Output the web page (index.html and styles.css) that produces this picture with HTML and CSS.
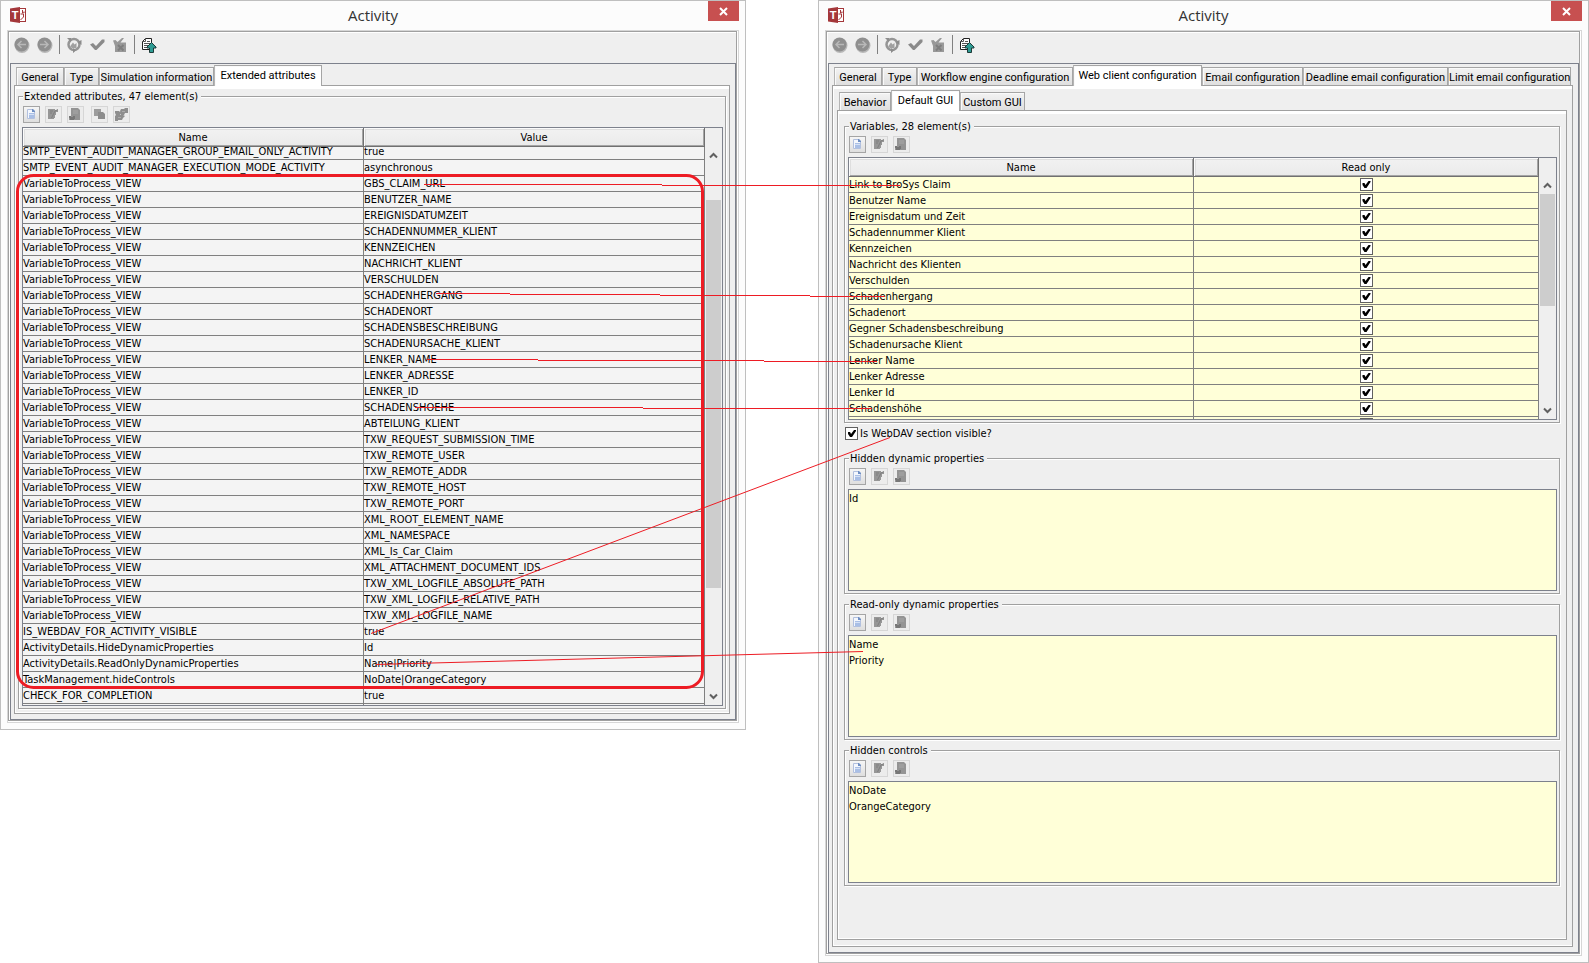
FILE: index.html
```html
<!DOCTYPE html>
<html lang="en">
<head>
<meta charset="utf-8">
<title>Activity</title>
<link rel="stylesheet" href="styles.css">
</head>
<body>
<svg class="defs" aria-hidden="true">
  <symbol id="logo" viewBox="0 0 16 16">
    <rect x="9.500" y="1.500" width="6" height="13" fill="#fff" stroke="#a4373a"/>
    <path d="M0 1.500 10 0v16L0 14.500z" fill="#a4373a"/>
    <path d="M12.500 3v3l1.500-1.500M10.500 7h3v3l-3 3M13 6.500 14.500 5" fill="none" stroke="#a4373a"/>
  </symbol>
  <symbol id="back" viewBox="0 0 16 16">
    <circle cx="8" cy="8.500" r="7.500" fill="#b9b9b9"/><circle cx="7.500" cy="7.500" r="7" fill="#8f8f8f"/>
    <path d="M12 7.500H4M7.500 4 4 7.500 7.500 11" fill="none" stroke="#b8b8b8" stroke-width="1.500"/>
  </symbol>
  <symbol id="forward" viewBox="0 0 16 16">
    <circle cx="8" cy="8.500" r="7.500" fill="#b9b9b9"/><circle cx="7.500" cy="7.500" r="7" fill="#8f8f8f"/>
    <path d="M3 7.500h8M7.500 4 11 7.500 7.500 11" fill="none" stroke="#b8b8b8" stroke-width="1.500"/>
  </symbol>
  <symbol id="refresh" viewBox="0 0 16 16">
    <circle cx="8" cy="7.500" r="5.500" fill="none" stroke="#959595" stroke-width="2.500"/>
    <path d="M4 9.500 7 5.500l1.500 2 2-1.500v5H6z" fill="#a0a0a0"/><path d="M7 16v-5l3 2.500zM1 1h4v4zM15.500 3v5l-4-3z" fill="#8c8c8c"/>
  </symbol>
  <symbol id="check" viewBox="0 0 16 16">
    <path d="M1 7.500 4 6l3 3 6-6.500h2.500V5L7.500 13H6z" fill="#8a8a8a"/>
  </symbol>
  <symbol id="check-page" viewBox="0 0 16 16">
    <path d="M1 3.500 3.500 3 5.500 5 10 1h2L8.500 5.500H14V15H3V9z" fill="#989898"/>
    <path d="M6 8l5.500 5.500M11.500 8 6 13.500" stroke="#7e7e7e" stroke-width="2"/>
  </symbol>
  <symbol id="export" viewBox="0 0 16 16">
    <path d="M4.500 1.500h6v11h-9v-8z" fill="#fff" stroke="#222"/><path d="M4.500 1.500v3h-3M6 4.500h3M3 6.500h6M3 8.500h5M3 10.500h4" fill="none" stroke="#555"/>
    <path d="M10.500 5.500 15 10v1h-2.500v4.500H8.500V11H6v-1z" fill="#2f9c94" stroke="#1d3a38"/>
  </symbol>
  <symbol id="new" viewBox="0 0 15 15">
    <path d="M3.500 2.500h5l2 2v7h-7z" fill="#f4f7fd" stroke="#b2c0de"/><path d="M8 2h1l2 2v1H8z" fill="#6f8fc4"/>
    <path d="M5 6h5v5H5z" fill="#a9bfe6"/><path d="M5 7.500h5" stroke="#d6e1f5"/>
  </symbol>
  <symbol id="edit" viewBox="0 0 15 15">
    <path d="M2 2h7v1h3v2h-2v3H9v3H8v1H2z" fill="#969696"/><path d="M4 4h3M4 6h2M12 2.500 9 4 5.500 11" fill="none" stroke="#7f7f7f"/>
  </symbol>
  <symbol id="delete" viewBox="0 0 15 15">
    <path d="M3 1h7l2 2v10H1v-3l2-1z" fill="#949494"/><path d="M5 4h5M5 6h5" stroke="#a8a8a8"/><path d="M1 9h2v1h2V9h2v3H6v1H2v-2H1z" fill="#777"/>
  </symbol>
  <symbol id="copy" viewBox="0 0 15 15">
    <path d="M2 2h7v7H2z" fill="#9c9c9c"/><path d="M6 5h5l2 2v5H6z" fill="#8c8c8c"/>
  </symbol>
  <symbol id="swap" viewBox="0 0 15 15">
    <path d="M7 2h3l1-1h3v5h-3l-1 2H7L6 4zM1 4h4l2 2-1 2H2L1 6zM2 8h7l2 1-2 2-1 2H4v1H1V9z" fill="#8e8e8e"/><path d="M8 4.500h3M4 10.500h3" stroke="#ababab"/>
  </symbol>
  <symbol id="up" viewBox="0 0 9 7"><path d="M1 5.500 4.500 2 8 5.500" fill="none" stroke="#606060" stroke-width="2"/></symbol>
  <symbol id="down" viewBox="0 0 9 7"><path d="M1 1.500 4.500 5 8 1.500" fill="none" stroke="#606060" stroke-width="2"/></symbol>
</svg>

<main class="stage">
  <section class="window window-a" aria-label="Activity, extended attributes">
    <header class="titlebar">
      <svg class="logo" viewBox="0 0 16 16"><use href="#logo"/><text x="5" y="12" text-anchor="middle" class="logo-letter">T</text></svg>
      <h1>Activity</h1>
      <button class="close" aria-label="Close"><svg viewBox="0 0 9 9"><path d="M1 1l7 7M8 1 1 8" stroke="#fff" stroke-width="2"/></svg></button>
    </header>
    <div class="frame"><div class="frame-inner">
      <div class="toolbar">
        <button aria-label="Back"><svg><use href="#back"/></svg></button>
        <button aria-label="Forward"><svg><use href="#forward"/></svg></button>
        <i class="sep"></i>
        <button aria-label="Refresh"><svg><use href="#refresh"/></svg></button>
        <button aria-label="Apply"><svg><use href="#check"/></svg></button>
        <button aria-label="Apply and close"><svg><use href="#check-page"/></svg></button>
        <i class="sep"></i>
        <button aria-label="Export"><svg><use href="#export"/></svg></button>
      </div>
      <div class="content">
        <nav class="tabs">
          <button class="tab w48">General</button><button class="tab w35">Type</button><button class="tab w115">Simulation information</button><button class="tab w108 selected">Extended attributes</button>
        </nav>
        <div class="pane">
          <fieldset>
            <legend>Extended attributes, 47 element(s)</legend>
            <div class="tools">
              <button aria-label="New"><svg><use href="#new"/></svg></button>
              <button class="off" aria-label="Edit"><svg><use href="#edit"/></svg></button>
              <button class="off" aria-label="Delete"><svg><use href="#delete"/></svg></button>
              <button class="off second" aria-label="Duplicate"><svg><use href="#copy"/></svg></button>
              <button class="off" aria-label="References"><svg><use href="#swap"/></svg></button>
            </div>
            <div class="grid">
              <table>
                <thead><tr><th>Name</th><th>Value</th></tr></thead>
                <tbody>
                <tr class="first"><td>SMTP_EVENT_AUDIT_MANAGER_GROUP_EMAIL_ONLY_ACTIVITY</td><td>true</td></tr>
                <tr><td>SMTP_EVENT_AUDIT_MANAGER_EXECUTION_MODE_ACTIVITY</td><td>asynchronous</td></tr>
                <tr><td>VariableToProcess_VIEW</td><td>GBS_CLAIM_URL</td></tr>
                <tr><td>VariableToProcess_VIEW</td><td>BENUTZER_NAME</td></tr>
                <tr><td>VariableToProcess_VIEW</td><td>EREIGNISDATUMZEIT</td></tr>
                <tr><td>VariableToProcess_VIEW</td><td>SCHADENNUMMER_KLIENT</td></tr>
                <tr><td>VariableToProcess_VIEW</td><td>KENNZEICHEN</td></tr>
                <tr><td>VariableToProcess_VIEW</td><td>NACHRICHT_KLIENT</td></tr>
                <tr><td>VariableToProcess_VIEW</td><td>VERSCHULDEN</td></tr>
                <tr><td>VariableToProcess_VIEW</td><td>SCHADENHERGANG</td></tr>
                <tr><td>VariableToProcess_VIEW</td><td>SCHADENORT</td></tr>
                <tr><td>VariableToProcess_VIEW</td><td>SCHADENSBESCHREIBUNG</td></tr>
                <tr><td>VariableToProcess_VIEW</td><td>SCHADENURSACHE_KLIENT</td></tr>
                <tr><td>VariableToProcess_VIEW</td><td>LENKER_NAME</td></tr>
                <tr><td>VariableToProcess_VIEW</td><td>LENKER_ADRESSE</td></tr>
                <tr><td>VariableToProcess_VIEW</td><td>LENKER_ID</td></tr>
                <tr><td>VariableToProcess_VIEW</td><td>SCHADENSHOEHE</td></tr>
                <tr><td>VariableToProcess_VIEW</td><td>ABTEILUNG_KLIENT</td></tr>
                <tr><td>VariableToProcess_VIEW</td><td>TXW_REQUEST_SUBMISSION_TIME</td></tr>
                <tr><td>VariableToProcess_VIEW</td><td>TXW_REMOTE_USER</td></tr>
                <tr><td>VariableToProcess_VIEW</td><td>TXW_REMOTE_ADDR</td></tr>
                <tr><td>VariableToProcess_VIEW</td><td>TXW_REMOTE_HOST</td></tr>
                <tr><td>VariableToProcess_VIEW</td><td>TXW_REMOTE_PORT</td></tr>
                <tr><td>VariableToProcess_VIEW</td><td>XML_ROOT_ELEMENT_NAME</td></tr>
                <tr><td>VariableToProcess_VIEW</td><td>XML_NAMESPACE</td></tr>
                <tr><td>VariableToProcess_VIEW</td><td>XML_Is_Car_Claim</td></tr>
                <tr><td>VariableToProcess_VIEW</td><td>XML_ATTACHMENT_DOCUMENT_IDS</td></tr>
                <tr><td>VariableToProcess_VIEW</td><td>TXW_XML_LOGFILE_ABSOLUTE_PATH</td></tr>
                <tr><td>VariableToProcess_VIEW</td><td>TXW_XML_LOGFILE_RELATIVE_PATH</td></tr>
                <tr><td>VariableToProcess_VIEW</td><td>TXW_XML_LOGFILE_NAME</td></tr>
                <tr><td>IS_WEBDAV_FOR_ACTIVITY_VISIBLE</td><td>true</td></tr>
                <tr><td>ActivityDetails.HideDynamicProperties</td><td>Id</td></tr>
                <tr><td>ActivityDetails.ReadOnlyDynamicProperties</td><td>Name|Priority</td></tr>
                <tr><td>TaskManagement.hideControls</td><td>NoDate|OrangeCategory</td></tr>
                <tr><td>CHECK_FOR_COMPLETION</td><td>true</td></tr>
                <tr class="rest"><td></td><td></td></tr>
                </tbody>
              </table>
              <div class="scroll">
                <button aria-label="Scroll up"><svg><use href="#up"/></svg></button>
                <div class="track"><div class="thumb thumb-a"></div></div>
                <button aria-label="Scroll down"><svg><use href="#down"/></svg></button>
              </div>
            </div>
          </fieldset>
        </div>
      </div>
    </div></div>
  </section>

  <section class="window window-b" aria-label="Activity, web client configuration">
    <header class="titlebar">
      <svg class="logo" viewBox="0 0 16 16"><use href="#logo"/><text x="5" y="12" text-anchor="middle" class="logo-letter">T</text></svg>
      <h1>Activity</h1>
      <button class="close" aria-label="Close"><svg viewBox="0 0 9 9"><path d="M1 1l7 7M8 1 1 8" stroke="#fff" stroke-width="2"/></svg></button>
    </header>
    <div class="frame"><div class="frame-inner">
      <div class="toolbar">
        <button aria-label="Back"><svg><use href="#back"/></svg></button>
        <button aria-label="Forward"><svg><use href="#forward"/></svg></button>
        <i class="sep"></i>
        <button aria-label="Refresh"><svg><use href="#refresh"/></svg></button>
        <button aria-label="Apply"><svg><use href="#check"/></svg></button>
        <button aria-label="Apply and close"><svg><use href="#check-page"/></svg></button>
        <i class="sep"></i>
        <button aria-label="Export"><svg><use href="#export"/></svg></button>
      </div>
      <div class="content">
        <nav class="tabs">
          <button class="tab w48">General</button><button class="tab w35">Type</button><button class="tab w156">Workflow engine configuration</button><button class="tab w129 selected">Web client configuration</button><button class="tab w101">Email configuration</button><button class="tab w145">Deadline email configuration</button><button class="tab w123">Limit email configuration</button>
        </nav>
        <div class="pane">
          <nav class="tabs">
            <button class="tab w52">Behavior</button><button class="tab w69 selected">Default GUI</button><button class="tab w65">Custom GUI</button>
          </nav>
          <div class="pane inner">
            <fieldset>
              <legend>Variables, 28 element(s)</legend>
              <div class="tools">
                <button aria-label="New"><svg><use href="#new"/></svg></button>
                <button class="off" aria-label="Edit"><svg><use href="#edit"/></svg></button>
                <button class="off" aria-label="Delete"><svg><use href="#delete"/></svg></button>
              </div>
              <div class="grid yellow">
                <table>
                  <thead><tr><th>Name</th><th>Read only</th></tr></thead>
                  <tbody>
                  <tr><td>Link to BroSys Claim</td><td><input type="checkbox" checked aria-label="Link to BroSys Claim"></td></tr>
                  <tr><td>Benutzer Name</td><td><input type="checkbox" checked aria-label="Benutzer Name"></td></tr>
                  <tr><td>Ereignisdatum und Zeit</td><td><input type="checkbox" checked aria-label="Ereignisdatum und Zeit"></td></tr>
                  <tr><td>Schadennummer Klient</td><td><input type="checkbox" checked aria-label="Schadennummer Klient"></td></tr>
                  <tr><td>Kennzeichen</td><td><input type="checkbox" checked aria-label="Kennzeichen"></td></tr>
                  <tr><td>Nachricht des Klienten</td><td><input type="checkbox" checked aria-label="Nachricht des Klienten"></td></tr>
                  <tr><td>Verschulden</td><td><input type="checkbox" checked aria-label="Verschulden"></td></tr>
                  <tr><td>Schadenhergang</td><td><input type="checkbox" checked aria-label="Schadenhergang"></td></tr>
                  <tr><td>Schadenort</td><td><input type="checkbox" checked aria-label="Schadenort"></td></tr>
                  <tr><td>Gegner Schadensbeschreibung</td><td><input type="checkbox" checked aria-label="Gegner Schadensbeschreibung"></td></tr>
                  <tr><td>Schadenursache Klient</td><td><input type="checkbox" checked aria-label="Schadenursache Klient"></td></tr>
                  <tr><td>Lenker Name</td><td><input type="checkbox" checked aria-label="Lenker Name"></td></tr>
                  <tr><td>Lenker Adresse</td><td><input type="checkbox" checked aria-label="Lenker Adresse"></td></tr>
                  <tr><td>Lenker Id</td><td><input type="checkbox" checked aria-label="Lenker Id"></td></tr>
                  <tr><td>Schadenshöhe</td><td><input type="checkbox" checked aria-label="Schadenshöhe"></td></tr>
                  <tr class="rest peek"><td></td><td><i></i></td></tr>
                  </tbody>
                </table>
                <div class="scroll">
                  <button aria-label="Scroll up"><svg><use href="#up"/></svg></button>
                  <div class="track"><div class="thumb thumb-b"></div></div>
                  <button aria-label="Scroll down"><svg><use href="#down"/></svg></button>
                </div>
              </div>
            </fieldset>
            <label class="option"><input type="checkbox" checked>Is WebDAV section visible?</label>
            <fieldset>
              <legend>Hidden dynamic properties</legend>
              <div class="tools">
                <button aria-label="New"><svg><use href="#new"/></svg></button>
                <button class="off" aria-label="Edit"><svg><use href="#edit"/></svg></button>
                <button class="off" aria-label="Delete"><svg><use href="#delete"/></svg></button>
              </div>
              <ul class="list"><li>Id</li></ul>
            </fieldset>
            <fieldset>
              <legend>Read-only dynamic properties</legend>
              <div class="tools">
                <button aria-label="New"><svg><use href="#new"/></svg></button>
                <button class="off" aria-label="Edit"><svg><use href="#edit"/></svg></button>
                <button class="off" aria-label="Delete"><svg><use href="#delete"/></svg></button>
              </div>
              <ul class="list"><li>Name</li><li>Priority</li></ul>
            </fieldset>
            <fieldset>
              <legend>Hidden controls</legend>
              <div class="tools">
                <button aria-label="New"><svg><use href="#new"/></svg></button>
                <button class="off" aria-label="Edit"><svg><use href="#edit"/></svg></button>
                <button class="off" aria-label="Delete"><svg><use href="#delete"/></svg></button>
              </div>
              <ul class="list"><li>NoDate</li><li>OrangeCategory</li></ul>
            </fieldset>
          </div>
        </div>
      </div>
    </div></div>
  </section>

  <svg class="marks" viewBox="0 0 1589 963" preserveAspectRatio="none" aria-hidden="true">
    <rect x="17.500" y="175.500" width="685" height="512" rx="16" class="ring"/>
    <path class="link" d="M424 184.500H662M662 185.500H900M436 293.500H510M510 294.500H660M660 295.500H810M810 296.500H885M427 359.500H538M538 360.500H764M764 361.500H877M415 407.500H643M643 408.500H872M371 633.500 890 437.500M376 664.500 863 651.500"/>
  </svg>
</main>
</body>
</html>
```
FILE: styles.css
```css
* { box-sizing: border-box; }

body {
  margin: 0;
  background: #fff;
  color: #000;
  font: 11px/15px "DejaVu Sans Condensed", "DejaVu Sans", sans-serif;
}

button {
  margin: 0;
  padding: 0;
  border: 0;
  background: none;
  color: inherit;
  font: inherit;
}

svg { display: block; }
.defs { display: none; }

.stage {
  position: relative;
  display: flex;
  align-items: flex-start;
  justify-content: space-between;
}

.window {
  border: 1px solid #bfbfbf;
  background: #fcfcfc;
  padding: 0 6px 6px;
  min-width: 0;
}
.window-a { width: 46.950%; }
.window-b { width: 48.520%; }

.titlebar {
  display: grid;
  grid-template-columns: 1fr auto 1fr;
  align-items: center;
  height: 29px;
  padding-bottom: 2px;
}
.titlebar h1 {
  margin: 0;
  color: #333;
  font: 400 15px/20px "Open Sans", sans-serif;
}
.logo { width: 16px; height: 16px; margin-left: 3px; }
.logo-letter { font: bold 11px "Liberation Sans", sans-serif; fill: #fff; }
.close {
  display: flex;
  align-items: center;
  justify-content: center;
  justify-self: end;
  align-self: start;
  width: 31px;
  height: 20px;
  background: #c75050;
}
.close svg { width: 9px; height: 9px; }

.frame {
  border: 1px solid #d6d6d6;
  padding: 0 1px 1px 0;
  background: #fff;
}
.frame-inner {
  border: 1px solid #a0a0a0;
  padding-left: 1px;
  background: #efefef;
  box-shadow: inset 1px 1px #fff;
}

.toolbar {
  display: flex;
  align-items: center;
  gap: 7px;
  height: 31px;
  padding: 0 4px 6px;
}
.toolbar svg { width: 16px; height: 16px; }
.sep {
  width: 1px;
  height: 19px;
  margin: 0 -1px;
  background: #808080;
}

.content {
  border: 1px solid #7d818c;
  padding: 1px 5px 5px 3px;
}

.tabs {
  display: flex;
  align-items: flex-end;
  height: 20px;
  padding-left: 2px;
}
.tab {
  height: 18px;
  border: 1px solid #a5a5a5;
  border-left-color: #b5b5b5;
  border-bottom: 0;
  padding-top: 2px;
  background: linear-gradient(#f3f3f3, #dfdfdf);
  box-shadow: inset 1px 1px #fafafa;
  font-family: Roboto, sans-serif;
  line-height: 15px;
  text-align: center;
  white-space: nowrap;
}
.tab.selected {
  position: relative;
  z-index: 1;
  height: 21px;
  margin-bottom: -1px;
  padding: 0 0 1px;
  background: #fff;
}
.w35 { width: 35px; }
.w48 { width: 48px; }
.w52 { width: 52px; }
.w65 { width: 65px; }
.w69 { width: 69px; }
.w101 { width: 101px; }
.w108 { width: 108px; }
.w115 { width: 115px; }
.w123 { width: 123px; }
.w129 { width: 129px; }
.w145 { width: 145px; }
.w156 { width: 156px; }

.pane {
  border: 1px solid #a0a0a0;
  padding: 3px 3px 4px;
  box-shadow: inset 0 3px #fff, inset 1px -1px #fff;
}
.pane > .tabs { margin-top: 1px; }
.pane:has(> .tabs) { padding: 3px 5px 6px 4px; }
.pane.inner { padding: 8px 6px 53px; }

fieldset {
  min-width: 0;
  margin: 0;
  border: 1px solid #a0a0a0;
  padding: 3px 2px 2px 3px;
  box-shadow: 1px 1px #fff, inset 1px 1px #fff;
}
fieldset + fieldset { margin-top: 3px; }
legend {
  margin-left: 1px;
  padding: 1px 3px 0 1px;
  background: #efefef;
  line-height: 13px;
}

.tools {
  display: flex;
  gap: 5px;
  padding: 0 1px;
  margin-bottom: 4px;
}
.tools button {
  width: 17px;
  height: 17px;
  border: 1px solid #a5a5a5;
  background: linear-gradient(#f6f6f6, #dedede);
}
.tools .off { border-color: #d6d6d6; background: #ececec; }
.tools .second { margin-left: 2px; }
.tools svg { width: 15px; height: 15px; }

.grid {
  display: flex;
  border: 1px solid #7d818c;
  background: #efefef;
}
table {
  flex: 1;
  width: 100%;
  table-layout: fixed;
  border-collapse: separate;
  border-spacing: 0;
  min-width: 0;
}
th {
  height: 19px;
  border: solid #707070;
  border-width: 0 1px 1px 0;
  padding: 0;
  background: linear-gradient(#f2f2f2, #eaeaea);
  box-shadow: inset 1px 1px #fbfbfb, inset -1px -1px #a5a5a5, inset 2px 2px #dedede;
  font-weight: 400;
}
td {
  height: 16px;
  border: solid #808080;
  border-width: 0 1px 1px 0;
  padding: 0;
  background: #f4f4f4;
  white-space: nowrap;
}
.yellow td { background: #ffffd8; }
.first td { height: 13px; padding-bottom: 2px; line-height: 10px; }
.rest td { height: 1px; border-bottom: 0; line-height: 0; }
.rest.peek td { height: 2px; }
.peek i {
  display: block;
  width: 13px;
  height: 1px;
  margin: 1px auto 0;
  background: #606060;
}

input[type="checkbox"] {
  appearance: none;
  display: block;
  width: 13px;
  height: 13px;
  margin: 0;
  border: 1px solid #606060;
  background: #fff;
}
td input[type="checkbox"] { margin: 0 auto; }
input[type="checkbox"]::after {
  content: "";
  display: block;
  width: 11px;
  height: 11px;
  background: #000;
  clip-path: polygon(2px 4px, 4px 4px, 5px 6px, 8px 2px, 10px 2px, 10px 3px, 6px 9px, 4px 9px, 2px 6px);
}

.scroll {
  display: flex;
  flex: none;
  flex-direction: column;
  width: 17px;
  padding-top: 19px;
}
.scroll button {
  display: grid;
  place-items: center;
  width: 17px;
  height: 17px;
}
.scroll svg { width: 9px; height: 7px; }
.track { flex: 1; padding: 0 1px; }
.thumb { background: #cdcdcd; }
.thumb-a { height: 388px; margin-top: 36px; }
.thumb-b { height: 112px; }

.option {
  display: flex;
  align-items: center;
  gap: 2px;
  width: max-content;
  margin: 3px 0 10px 1px;
}

.list {
  height: 102px;
  margin: 0;
  border: 1px solid #7d818c;
  padding: 1px 0 0;
  background: #ffffd8;
  list-style: none;
  line-height: 16px;
}

.marks {
  position: absolute;
  top: 0;
  left: 0;
  width: 100%;
  height: 963px;
  pointer-events: none;
}
.ring { fill: none; stroke: #ed1c24; stroke-width: 3; }
.link { fill: none; stroke: #ed1c24; stroke-width: 1; }
```
